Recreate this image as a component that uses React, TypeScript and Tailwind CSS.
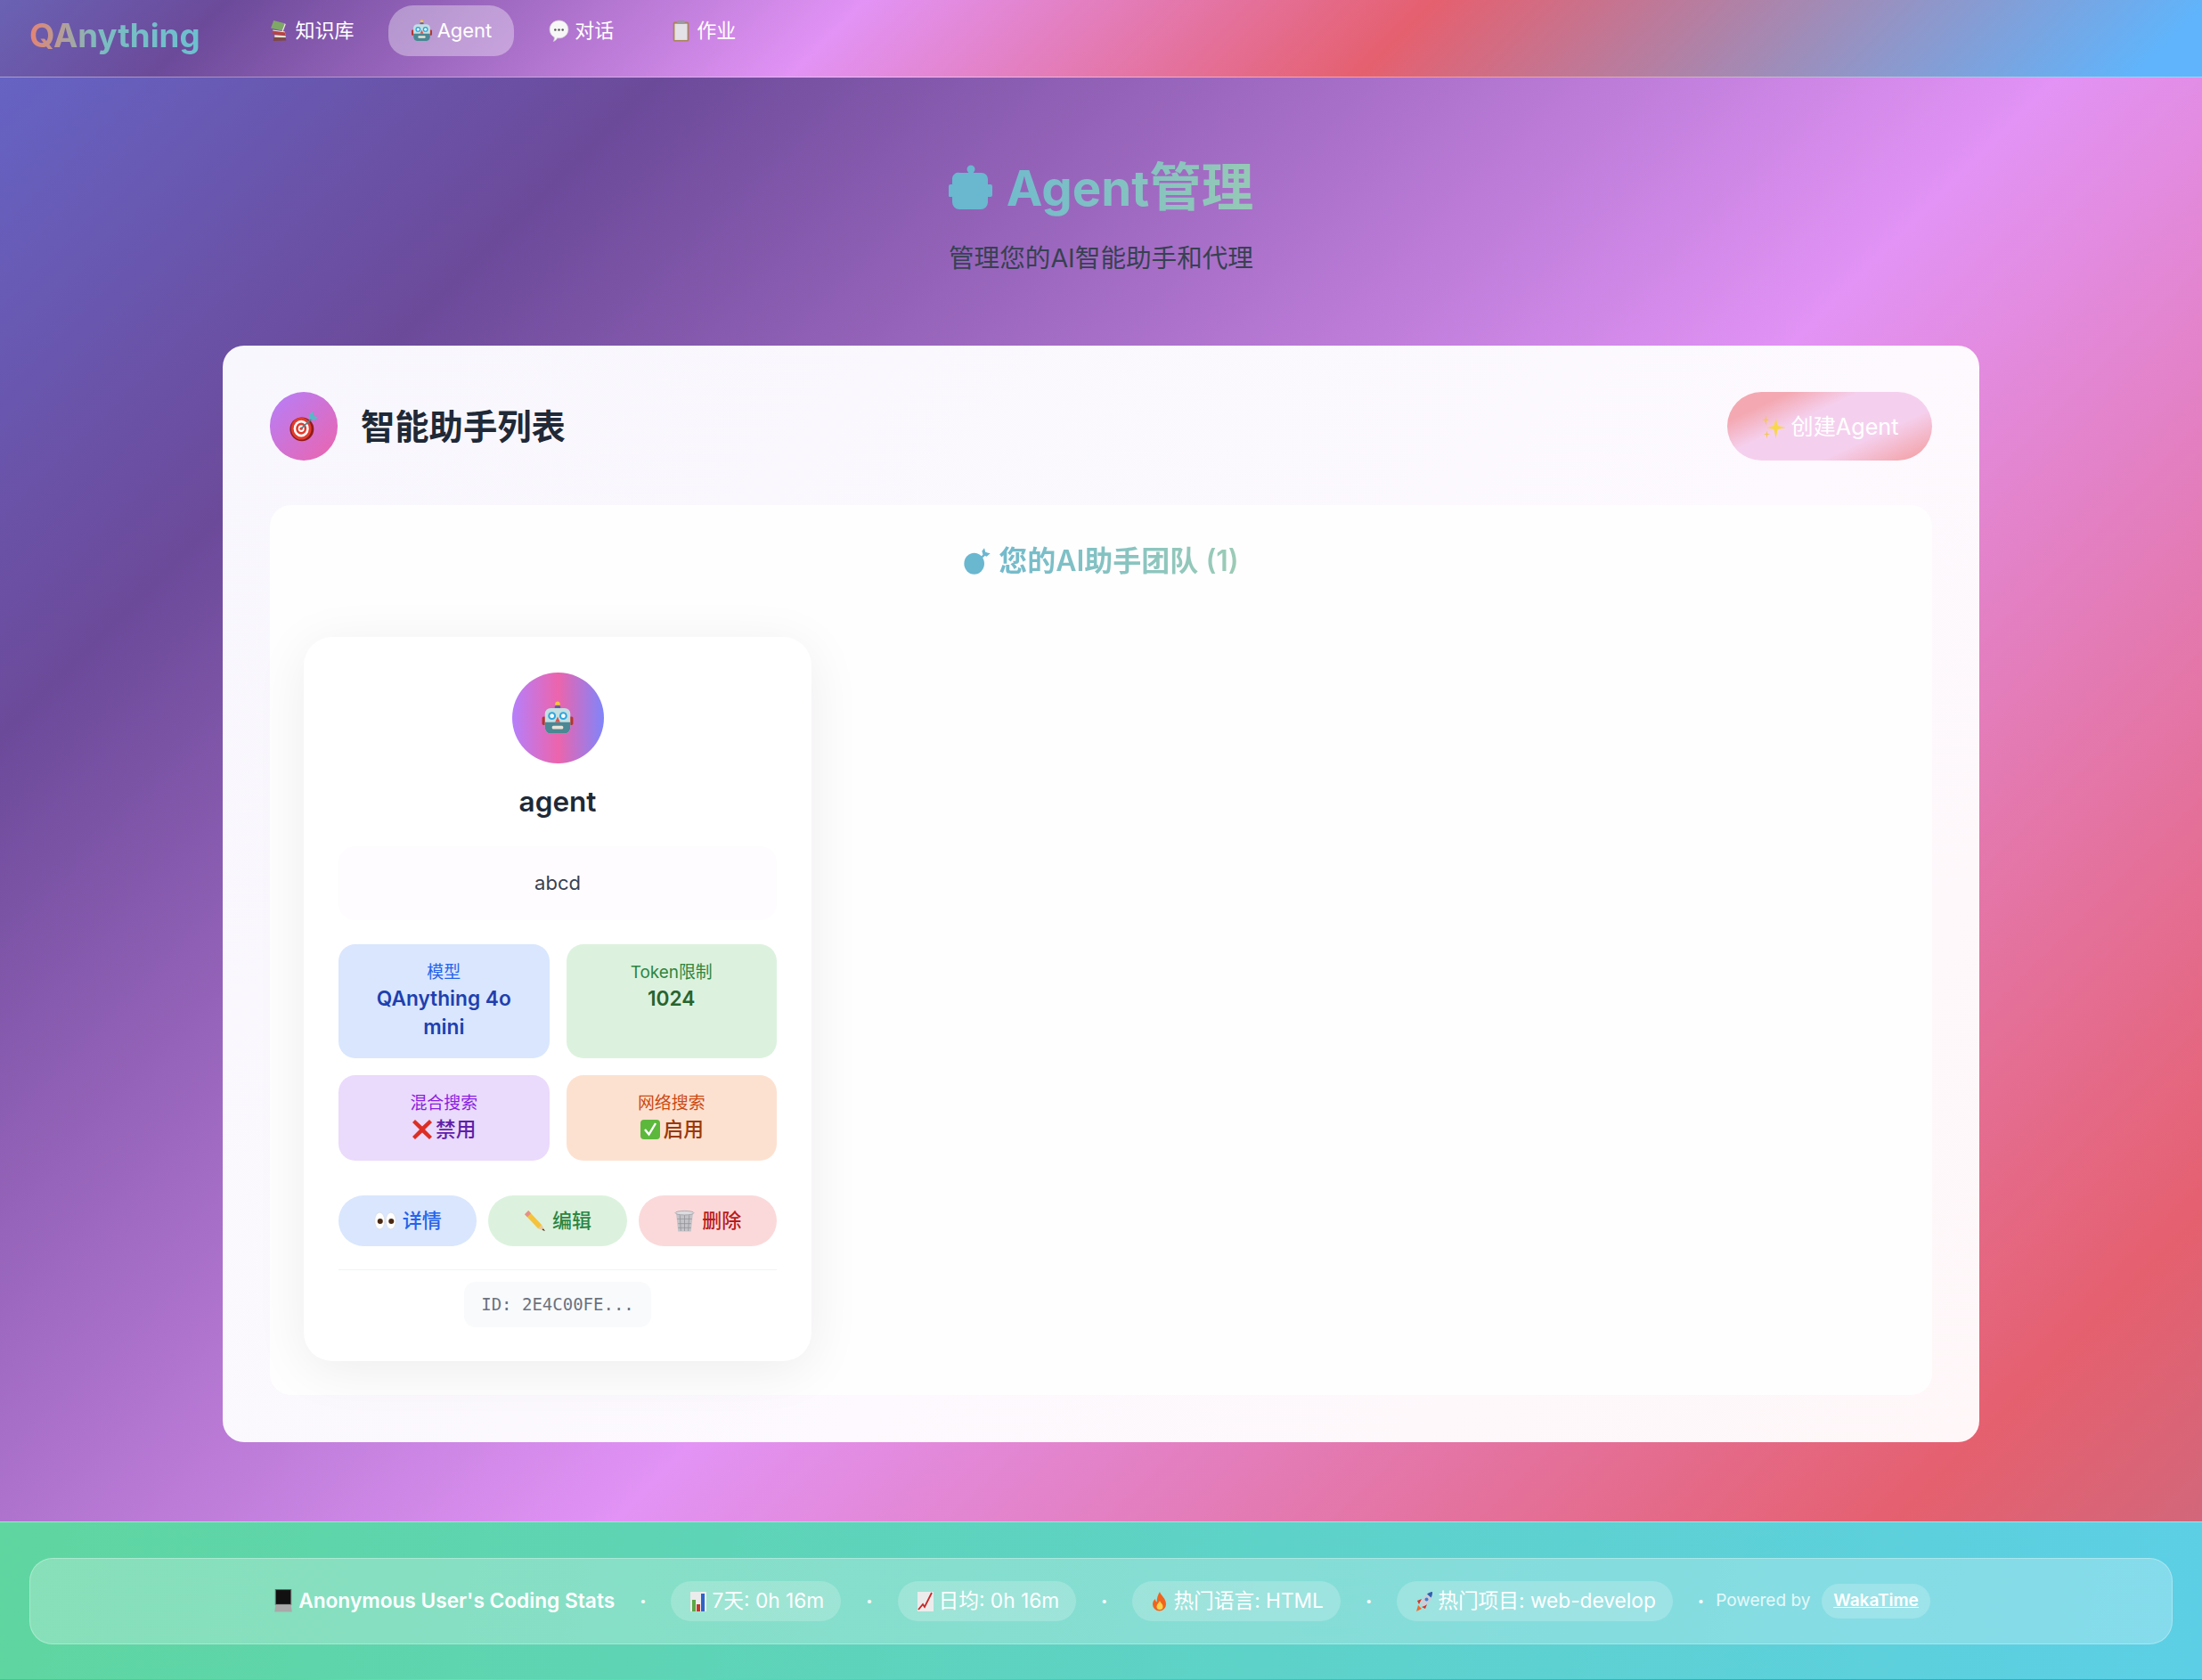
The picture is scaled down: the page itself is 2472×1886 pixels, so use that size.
const sans = "font-['Inter','Noto_Sans_CJK_SC',sans-serif]";

type IconProps = { className?: string };

function Books({ className }: IconProps) {
    return (
        <svg viewBox="0 0 24 24" className={className}>
            <path d="M5 1l12 3-3 8-12-3z" fill="#7fa867" />
            <path d="M14 12l3-8 1 1-3 8z" fill="#f0ead8" />
            <path d="M4 11l13 2 1 3-13-1z" fill="#f3f0e8" />
            <path d="M4 12l14 2-.5 3-14-1.500z" fill="#b8433f" />
            <path d="M6 16.500l12 1v2l-12 .5z" fill="#ece6d8" />
            <path d="M5 19l13 .5.500 3-14 .5z" fill="#7d4a45" />
        </svg>
    );
}

function Robot({ className }: IconProps) {
    return (
        <svg viewBox="0 0 24 24" className={className}>
            <circle cx="12" cy="2" r="1.700" fill="#f5c542" />
            <rect x="10" y="3" width="4" height="2.500" rx="1" fill="#6b5a9a" />
            <rect x="1" y="11" width="2.800" height="6" rx="1" fill="#b5342e" />
            <rect x="20.200" y="11" width="2.800" height="6" rx="1" fill="#b5342e" />
            <rect x="3" y="5" width="18" height="18" rx="4" fill="#c3dfe2" />
            <path d="M3 15h18v4a4 4 0 0 1-4 4H7a4 4 0 0 1-4-4z" fill="#4b8794" />
            <circle cx="8" cy="10.500" r="2.800" fill="#2fa5dc" />
            <circle cx="16" cy="10.500" r="2.800" fill="#2fa5dc" />
            <circle cx="8" cy="10.500" r="1.500" fill="#fff" />
            <circle cx="16" cy="10.500" r="1.500" fill="#fff" />
            <path d="M12 11l1.800 4h-3.600z" fill="#d9534f" />
            <rect x="8" y="17.500" width="8" height="2.400" rx="1" fill="#e8e4d8" />
        </svg>
    );
}

function Bubble({ className }: IconProps) {
    return (
        <svg viewBox="0 0 24 24" className={className}>
            <path d="M12 1c5.500 0 10 4 10 9.500S17.500 20 12 20c-.6 0-1.200 0-1.800-.1C9 22 7.500 23.200 6 23.400c.9-1.300 1.200-2.900 1-4.400C3.800 17.300 2 14 2 10.500 2 5 6.500 1 12 1z" fill="#f7f7f7" stroke="#d0d0d0" strokeWidth=".7" />
            <circle cx="8" cy="11" r="1.200" fill="#555" />
            <circle cx="12" cy="11" r="1.200" fill="#555" />
            <circle cx="16" cy="11" r="1.200" fill="#555" />
        </svg>
    );
}

function Clipboard({ className }: IconProps) {
    return (
        <svg viewBox="0 0 24 24" className={className}>
            <rect x="3.500" y="2.500" width="17" height="21" rx="1.500" fill="#a9835c" />
            <rect x="5.200" y="4.500" width="13.600" height="17.500" fill="#e4e2e6" />
            <rect x="8" y="1" width="8" height="3.500" rx="1" fill="#9a9aa0" />
        </svg>
    );
}

function Target({ className }: IconProps) {
    return (
        <svg viewBox="0 0 24 24" className={className}>
            <circle cx="10.500" cy="14" r="9.500" fill="#8f1d1a" />
            <ellipse cx="10" cy="13.500" rx="8" ry="8.800" fill="#e33b2e" />
            <ellipse cx="10" cy="13.500" rx="6" ry="6.700" fill="#fff" />
            <ellipse cx="10" cy="13.500" rx="4.200" ry="4.700" fill="#e33b2e" />
            <ellipse cx="10" cy="13.500" rx="2.400" ry="2.700" fill="#fff" />
            <circle cx="10" cy="13.500" r="1.200" fill="#e33b2e" />
            <path d="M10 13.500L20 4" stroke="#4b8794" strokeWidth="1.200" />
            <path d="M19 0l1 3.500 3.500 1-3 2.500-3.500-1-1-3.500z" fill="#59b8c7" />
        </svg>
    );
}

function Sparkles({ className }: IconProps) {
    return (
        <svg viewBox="0 0 24 24" className={className}>
            <path d="M14 3l1.600 7.400L23 12l-7.400 1.600L14 22l-1.600-8.400L6 12l6.400-1.600z" fill="#f8d74a" />
            <path d="M5 1l.7 3.300L8 5l-2.300.7L5 10l-.7-4.300L2 5l2.300-.7z" fill="#f3c75a" />
            <path d="M6 15l.6 2.400L9 18l-2.400.6L6 22l-.6-3.400L3 18l2.400-.6z" fill="#f3c75a" />
        </svg>
    );
}

function Eyes({ className }: IconProps) {
    return (
        <svg viewBox="0 0 24 24" className={className}>
            <ellipse cx="6" cy="12" rx="5.300" ry="9" fill="#fff" stroke="#d8d8d8" strokeWidth=".6" />
            <ellipse cx="18" cy="12" rx="5.300" ry="9" fill="#fff" stroke="#d8d8d8" strokeWidth=".6" />
            <circle cx="6.500" cy="12.500" r="2.900" fill="#4a2a12" />
            <circle cx="18.500" cy="12.500" r="2.900" fill="#4a2a12" />
        </svg>
    );
}

function Pencil({ className }: IconProps) {
    return (
        <svg viewBox="0 0 24 24" className={className}>
            <path d="M1 5l4-4 14.500 15.500-4 4z" fill="#f5c33b" />
            <path d="M1 5l4-4 2.800 3-4 4z" fill="#e58f8f" />
            <path d="M15.500 20.500l4-4 3.500 6.500z" fill="#e8c9a0" />
            <path d="M21 20.500l2 2.500-3.200-1.200z" fill="#333" />
        </svg>
    );
}

function Trash({ className }: IconProps) {
    return (
        <svg viewBox="0 0 24 24" className={className}>
            <path d="M3 4h18l-2 19.500H5z" fill="#c4c4c8" />
            <path d="M7 6l1 17M12 6v17M17 6l-1 17M4 10h16M5 15h14M5 19.500h14" stroke="#95959b" strokeWidth=".8" />
            <ellipse cx="12" cy="3.500" rx="10" ry="2.200" fill="#dcdce0" stroke="#8f8f95" strokeWidth=".6" />
        </svg>
    );
}

function Cross({ className }: IconProps) {
    return (
        <svg viewBox="0 0 24 24" className={className}>
            <path d="M4 1l8 7.500L20 1l3 3-8 8 8 8-3 3-8-7.500L4 23l-3-3 8-8-8-8z" fill="#dd2e23" />
        </svg>
    );
}

function Check({ className }: IconProps) {
    return (
        <svg viewBox="0 0 24 24" className={className}>
            <rect x="1" y="1" width="22" height="22" rx="4" fill="#5cb83c" />
            <path d="M6 12l4.500 5.500L18 5" fill="none" stroke="#fff" strokeWidth="2.400" />
        </svg>
    );
}

function Laptop({ className }: IconProps) {
    return (
        <svg viewBox="0 0 24 24" className={className}>
            <rect x="4" y="0.500" width="16" height="15.500" fill="#111" stroke="#666" />
            <path d="M4 16h16l1 7.500H3z" fill="#a9a9a9" />
        </svg>
    );
}

function BarChart({ className }: IconProps) {
    return (
        <svg viewBox="0 0 24 24" className={className}>
            <rect x="3" y="1" width="18" height="22" fill="#ececec" />
            <rect x="5" y="10" width="4" height="13" fill="#5aa845" />
            <rect x="10" y="15" width="4" height="8" fill="#c0392b" />
            <rect x="15" y="3" width="4" height="20" fill="#2f63c8" />
        </svg>
    );
}

function LineChart({ className }: IconProps) {
    return (
        <svg viewBox="0 0 24 24" className={className}>
            <rect x="3" y="1" width="18" height="22" fill="#ececec" />
            <path d="M4 21l5-6 2 3 8-16" fill="none" stroke="#c62828" strokeWidth="1.800" />
        </svg>
    );
}

function Flame({ className }: IconProps) {
    return (
        <svg viewBox="0 0 24 24" className={className}>
            <path d="M12 1c1 4 7 7 7 14a7.500 7.500 0 0 1-15 0c0-3 1.500-5 3-6 0 2 .7 3 1.700 3.500C8.500 8 10 4 12 1z" fill="#f0641e" />
            <path d="M12 11c.5 2 3.500 3.500 3.500 6.500a3.500 3.500 0 0 1-7 0c0-2.500 2.500-4 3.500-6.500z" fill="#fbd24c" />
        </svg>
    );
}

function Rocket({ className }: IconProps) {
    return (
        <svg viewBox="0 0 24 24" className={className}>
            <path d="M3 23l2-7 4 4z" fill="#ef6c2f" />
            <path d="M4 11l5-2-3 6zM13 20l2-5-6 3z" fill="#d9342b" />
            <path d="M21 1c-6 1-11 6-14 13l3.500 3.500c7-3 11-9 10.500-16.500z" fill="#c9ced8" />
            <path d="M21 1c-2 .3-4 1.200-6 2.500L19.500 7.500C20.700 5.500 21.200 3 21 1z" fill="#2f5fb0" />
            <circle cx="14.500" cy="9.500" r="2" fill="#3f7fd0" />
        </svg>
    );
}

function RobotSolid({ className }: IconProps) {
    return (
        <svg viewBox="0 0 50 50" className={className}>
            <circle cx="25" cy="5" r="4.500" fill="#6ab7d0" />
            <path d="M13 9h24a7 7 0 0 1 7 7v6h3a2 2 0 0 1 2 2v10a2 2 0 0 1-2 2h-3v6a8 8 0 0 1-8 8H12a8 8 0 0 1-8-8v-6H1a1 1 0 0 1-1-1V24a2 2 0 0 1 2-2h2v-6a7 7 0 0 1 9-7z" fill="#6ab7d0" />
        </svg>
    );
}

function DartSolid({ className }: IconProps) {
    return (
        <svg viewBox="0 0 24 24" className={className}>
            <ellipse cx="9.500" cy="14" rx="8.500" ry="9" fill="#6ab7d0" />
            <path d="M12 12l8-7" stroke="#6ab7d0" strokeWidth="1.800" />
            <path d="M18 1l1 3.500 4 1-3 2.500-3-1-1-3.500z" fill="#6ab7d0" />
        </svg>
    );
}

const navItems = [
    { label: "知识库", icon: Books, active: false },
    { label: "Agent", icon: Robot, active: true },
    { label: "对话", icon: Bubble, active: false },
    { label: "作业", icon: Clipboard, active: false },
];

const stats = [
    { label: "模型", value: "QAnything 4o mini", box: "bg-[#d9e6fe]", labelColor: "text-[#2563eb]", valueColor: "text-[#1e40af] font-semibold" },
    { label: "Token限制", value: "1024", box: "bg-[#dcf2de]", labelColor: "text-[#2e8540]", valueColor: "text-[#27642f] font-semibold" },
    { label: "混合搜索", value: "禁用", status: Cross, box: "bg-[#eadafc]", labelColor: "text-[#8a1fe0]", valueColor: "text-[#5f1fa8] font-medium" },
    { label: "网络搜索", value: "启用", status: Check, box: "bg-[#fde1d0]", labelColor: "text-[#cc4a12]", valueColor: "text-[#98390f] font-medium" },
];

const actions = [
    { label: "详情", icon: Eyes, cls: "bg-[#d9e6fe] text-[#2563eb]" },
    { label: "编辑", icon: Pencil, cls: "bg-[#dcf2de] text-[#2e8540]" },
    { label: "删除", icon: Trash, cls: "bg-[#fbd9da] text-[#b91c1c]" },
];

const footerPills = [
    { label: "7天: 0h 16m", icon: BarChart },
    { label: "日均: 0h 16m", icon: LineChart },
    { label: "热门语言: HTML", icon: Flame },
    { label: "热门项目: web-develop", icon: Rocket },
];

function Dot() {
    return <span className="text-[13px] leading-none text-white/90">•</span>;
}

export default function App() {
    return (
        <div className={`${sans} flex min-h-[1886px] w-full flex-col bg-[linear-gradient(135deg,#6566c8_0%,#6c4a9a_19%,#e293f5_55%,#e5606f_88%,#c96a80_100%)]`}>
            <nav className="flex h-[87px] items-start border-b border-white/40 bg-[linear-gradient(135deg,#6a62b4_0%,#6c4a9a_10%,#e293f5_38%,#e5606f_63%,#60b4fb_97%)] pl-[33px] pt-[6px]">
                <div className="mr-[52px] mt-[8px] bg-[linear-gradient(90deg,#e58373_0%,#7dbcc0_40%,#6cc0d0_100%)] bg-clip-text text-[36.700px] font-bold leading-[52px] text-transparent">
                    QAnything
                </div>
                <div className="flex gap-[13px]">
                    {navItems.map((item) => (
                        <div
                            key={item.label}
                            className={`flex h-[57px] items-center gap-[5px] rounded-[28px_28px_22px_22px] px-[25px] text-[22px] text-white ${item.active ? "bg-white/35" : ""}`}
                        >
                            <item.icon className="h-[25px] w-[25px]" />
                            <span>{item.label}</span>
                        </div>
                    ))}
                </div>
            </nav>

            <main className="flex flex-1 flex-col items-center pt-[81px]">
                <h1 className="flex h-[84px] items-center gap-[15px] font-bold leading-[84px]">
                    <RobotSolid className="h-[50px] w-[50px]" />
                    <span className="bg-[linear-gradient(90deg,#72bbcc_0%,#96c9b6_100%)] bg-clip-text text-[54.600px] text-transparent">
                        Agent<span className="text-[58.500px]">管理</span>
                    </span>
                </h1>
                <p className="mt-[15px] text-[28.600px] leading-[45px] text-[#374151]">管理您的AI智能助手和代理</p>

                <section className="mt-[76px] w-[1972px] rounded-[24px] bg-[linear-gradient(135deg,#f8f7fd_0%,#fdf9fe_60%,#fff7f8_100%)] px-[53px] pb-[53px] pt-[52px]">
                    <div className="flex items-center justify-between">
                        <div className="flex items-center gap-[26px]">
                            <div className="flex h-[77px] w-[76px] items-center justify-center rounded-full bg-[linear-gradient(135deg,#b57ffb,#ec64ac)]">
                                <Target className="h-[34px] w-[34px]" />
                            </div>
                            <h2 className="pt-[2px] text-[38.300px] font-semibold text-[#1f2937]">智能助手列表</h2>
                        </div>
                        <button className="flex h-[77px] w-[230px] items-center justify-center gap-[4px] rounded-full bg-[linear-gradient(155deg,#f4a9b2_0%,#f4a9b2_18%,#f5d0ee_38%,#f5d0ee_68%,#f3a8b0_92%)] pt-[2px] text-[25.200px] text-white">
                            <Sparkles className="h-[30px] w-[30px]" />
                            创建Agent
                        </button>
                    </div>

                    <div className="mt-[50px] rounded-[24px] bg-white/90 p-[38px]">
                        <h3 className="flex items-center justify-center gap-[8px] text-[32px] font-semibold leading-[50px]">
                            <DartSolid className="h-[32px] w-[32px]" />
                            <span className="bg-[linear-gradient(90deg,#72bbcc_0%,#9ccbb6_100%)] bg-clip-text text-transparent">您的AI助手团队 (1)</span>
                        </h3>

                        <div className="mt-[60px] grid grid-cols-[570px]">
                            <article className="rounded-[32px] bg-white px-[39px] pb-[38px] pt-[40px] shadow-[0_10px_60px_rgba(0,0,0,0.07)]">
                                <div className="flex flex-col items-center">
                                    <div className="flex h-[102px] w-[103px] items-center justify-center rounded-full bg-[linear-gradient(90deg,#b57ffb_0%,#ec64ac_50%,#8085fb_100%)]">
                                        <Robot className="h-[38px] w-[38px]" />
                                    </div>
                                    <h4 className="mt-[21px] text-[31.500px] font-semibold leading-[44px] text-[#1f2937]">agent</h4>
                                </div>

                                <p className="mt-[28px] rounded-[19px] bg-[#fefcfe] py-[24px] text-center text-[22px] leading-[35px] text-[#374151]">abcd</p>

                                <div className="mt-[27px] grid grid-cols-2 gap-[19px]">
                                    {stats.map((stat) => (
                                        <div key={stat.label} className={`rounded-[19px] px-[25px] py-[19px] text-center ${stat.box}`}>
                                            <div className={`text-[18.900px] leading-[26px] ${stat.labelColor}`}>{stat.label}</div>
                                            <div className={`flex flex-wrap items-center justify-center gap-[3px] text-[22.700px] leading-[32px] ${stat.valueColor}`}>
                                                {stat.status && <stat.status className="h-[24px] w-[24px]" />}
                                                <span>{stat.value}</span>
                                            </div>
                                        </div>
                                    ))}
                                </div>

                                <div className="mt-[39px] grid grid-cols-3 gap-[13px]">
                                    {actions.map((action) => (
                                        <button key={action.label} className={`flex h-[57px] items-center justify-center gap-[7px] rounded-full text-[22px] font-medium ${action.cls}`}>
                                            <action.icon className="h-[25px] w-[25px]" />
                                            {action.label}
                                        </button>
                                    ))}
                                </div>

                                <div className="mt-[26px] flex justify-center border-t border-[#f1f2f4] pt-[13px]">
                                    <span className="rounded-[13px] bg-[#f9fafb] px-[19px] py-[12px] font-['DejaVu_Sans_Mono',monospace] text-[19px] leading-[27px] text-[#6b7280]">
                                        ID: 2E4C00FE...
                                    </span>
                                </div>
                            </article>
                        </div>
                    </div>
                </section>
            </main>

            <footer className="mb-[1px] border-t border-white/40 bg-[linear-gradient(100deg,#5fd6a0_0%,#5ccfe6_100%)] px-[33px] pb-[39px] pt-[40px]">
                <div className="flex h-[97px] items-center justify-center rounded-[26px] border border-white/30 bg-white/25 text-[22.700px] text-white">
                    <div className="flex items-center gap-[28px]">
                        <div className="flex items-center gap-[4px] font-semibold">
                            <Laptop className="h-[26px] w-[26px]" />
                            Anonymous User's Coding Stats
                        </div>
                        {footerPills.map((pill) => (
                            <div key={pill.label} className="flex items-center gap-[28px]">
                                <Dot />
                                <div className="flex h-[45px] items-center gap-[3px] rounded-full bg-white/20 px-[19px]">
                                    <pill.icon className="h-[24px] w-[24px]" />
                                    {pill.label}
                                </div>
                            </div>
                        ))}
                        <div className="flex items-center gap-[13px] text-[19px]">
                            <Dot />
                            <span className="text-white/80">Powered by</span>
                            <a className="flex h-[39px] items-center rounded-full bg-white/20 px-[13px] font-semibold underline">WakaTime</a>
                        </div>
                    </div>
                </div>
            </footer>
        </div>
    );
}
